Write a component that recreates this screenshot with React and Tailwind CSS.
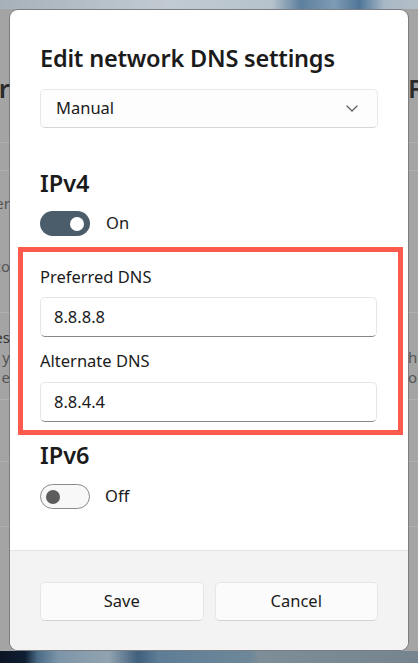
import React from 'react';

const font = { fontFamily: '"Noto Sans", "Open Sans", sans-serif' };

const Toggle = ({ on }) =>
  on ? (
    <div className="w-[50px] h-[25px] rounded-full bg-[#4b5d6b] flex items-center justify-end pr-[6px]">
      <div className="w-[14px] h-[14px] rounded-full bg-white" />
    </div>
  ) : (
    <div className="w-[50px] h-[25px] rounded-full bg-[#f8f8f8] border border-[#8a8a8a] flex items-center pl-[5px]">
      <div className="w-[14px] h-[14px] rounded-full bg-[#5d5d5d]" />
    </div>
  );

const TextBox = ({ value }) => (
  <div className="h-[40px] rounded-[5px] bg-white border border-[#e6e6e6] border-b-[#878787] flex items-center pl-[13px] text-[16.5px] text-[#1b1b1b]">
    {value}
  </div>
);

export default function App() {
  return (
    <div className="relative w-[418px] h-[663px] overflow-hidden bg-[#a4a4a4]" style={font}>
      {/* dimmed settings page + wallpaper behind the dialog */}
      <div className="absolute inset-0 flex flex-col">
        <div className="h-[9px] bg-[linear-gradient(90deg,#a7b1b9_0%,#c2cbd2_40%,#b6c3cc_65%,#5d7f9e_72%,#7f9bb4_80%,#4f7698_86%,#a9b9c6_92%,#b3bec7_100%)]" />
        <div className="flex-1 flex justify-between">
          <div className="w-[10px] overflow-hidden flex flex-col items-end">
            <div className="h-[94px] shrink-0 flex items-end justify-end text-[26px] font-semibold text-[#2b2b2b] leading-none pb-[2px]">r</div>
            <div className="w-full h-[40px] shrink-0 border-b border-[#b0b0b0]" />
            <div className="w-full h-[28px] shrink-0 border-b border-[#b0b0b0]" />
            <div className="h-[65px] shrink-0 flex items-center text-[15px] text-[#555]">er</div>
            <div className="h-[60px] shrink-0 flex items-center text-[15px] text-[#555]">co</div>
            <div className="w-full h-[17px] shrink-0 border-b border-[#b0b0b0]" />
            <div className="h-[85px] shrink-0 flex flex-col items-end pt-[14px] text-[15px] leading-[20px] text-[#555]">
              <span className="text-[#333]">es</span>
              <span>y</span>
              <span>e</span>
            </div>
            <div className="w-full h-[2px] shrink-0 border-b border-[#b0b0b0]" />
            <div className="w-full h-[62px] shrink-0 border-b border-[#b0b0b0]" />
            <div className="w-full h-[65px] shrink-0 border-b border-[#b0b0b0]" />
          </div>
          <div className="w-[10px] overflow-hidden flex flex-col items-start">
            <div className="h-[94px] shrink-0 flex items-end text-[26px] font-semibold text-[#2b2b2b] leading-none pb-[2px]">F</div>
            <div className="w-full h-[40px] shrink-0 border-b border-[#b0b0b0]" />
            <div className="w-full h-[28px] shrink-0 border-b border-[#b0b0b0]" />
            <div className="h-[125px] shrink-0" />
            <div className="w-full h-[17px] shrink-0 border-b border-[#b0b0b0]" />
            <div className="h-[85px] shrink-0 flex flex-col items-start pt-[34px] text-[15px] leading-[20px] text-[#555]">
              <span>h</span>
              <span>or</span>
            </div>
            <div className="w-full h-[2px] shrink-0 border-b border-[#b0b0b0]" />
            <div className="w-full h-[62px] shrink-0 border-b border-[#b0b0b0]" />
            <div className="w-full h-[65px] shrink-0 border-b border-[#b0b0b0]" />
          </div>
        </div>
        <div className="h-[12px] bg-[linear-gradient(90deg,#0b1524_0%,#0f1f33_6%,#4a6a86_9%,#7d95a8_14%,#92a3b0_26%,#3f5f7c_33%,#5e7d96_38%,#6e8899_60%,#7e8e98_62%,#75848e_100%)]" />
      </div>

      {/* dialog */}
      <div className="absolute left-[10px] top-[10px] w-[398px] h-[640px] rounded-[8px] bg-white overflow-hidden flex flex-col shadow-[0_0_0_1px_rgba(70,80,90,0.45)]">
        <div className="flex-1 flex flex-col pt-[32px]">
          <div className="px-[30px] flex flex-col">
            <h1 className="text-[23.5px] leading-[32px] font-semibold tracking-[-0.2px] text-[#1b1b1b]">Edit network DNS settings</h1>
            <div className="mt-[15px] h-[39px] rounded-[5px] border border-[#e8e8e8] border-b-[#d6d6d6] bg-[#fdfdfd] flex items-center justify-between pl-[15px] pr-[19px] text-[16.5px] text-[#1b1b1b]">
              <span>Manual</span>
              <svg width="12" height="7" viewBox="0 0 12 7" fill="none">
                <path d="M1 1l5 5 5-5" stroke="#5a5a5a" strokeWidth="1.2" strokeLinecap="round" strokeLinejoin="round" />
              </svg>
            </div>
            <h2 className="mt-[39px] text-[23.5px] leading-[32px] font-semibold text-[#1b1b1b]">IPv4</h2>
            <div className="mt-[12px] flex items-center gap-[16px] text-[16.5px] text-[#1b1b1b]">
              <Toggle on />
              <span>On</span>
            </div>
          </div>

          <div className="mt-[11px] ml-[8px] w-[385px] border-[5px] border-[#fc5a4d] pt-[13px] pb-[8px] pl-[17px] pr-[21px] flex flex-col">
            <div className="text-[16.5px] leading-[24px] text-[#1b1b1b]">Preferred DNS</div>
            <div className="mt-[8px]">
              <TextBox value="8.8.8.8" />
            </div>
            <div className="mt-[12px] text-[16.5px] leading-[24px] text-[#1b1b1b]">Alternate DNS</div>
            <div className="mt-[9px]">
              <TextBox value="8.8.4.4" />
            </div>
          </div>

          <div className="px-[30px] flex flex-col">
            <h2 className="mt-[4px] text-[23.5px] leading-[32px] font-semibold text-[#1b1b1b]">IPv6</h2>
            <div className="mt-[13px] flex items-center gap-[15px] text-[16.5px] text-[#1b1b1b]">
              <Toggle />
              <span>Off</span>
            </div>
          </div>
        </div>

        <div className="h-[100px] shrink-0 bg-[#f3f3f3] border-t border-[#e3e3e3] px-[30px] pt-[31px] flex gap-[11px]">
          <button className="flex-1 h-[39px] rounded-[5px] bg-[#fbfbfb] border border-[#e6e6e6] border-b-[#d2d2d2] text-[16.5px] text-[#1b1b1b]">Save</button>
          <button className="flex-1 h-[39px] rounded-[5px] bg-[#fbfbfb] border border-[#e6e6e6] border-b-[#d2d2d2] text-[16.5px] text-[#1b1b1b]">Cancel</button>
        </div>
      </div>
    </div>
  );
}
